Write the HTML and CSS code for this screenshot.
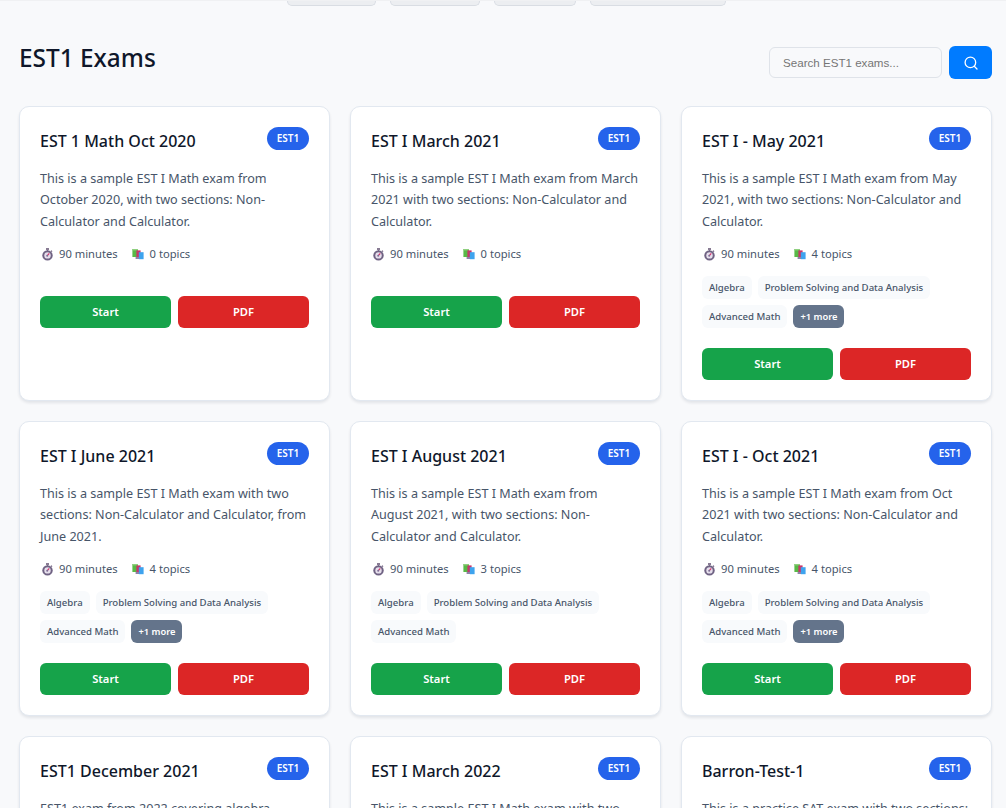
FILE: index.html
```html
<!DOCTYPE html>
<html lang="en">
  <head>
    <meta charset="UTF-8" />
    <title>EST1 Exams</title>
    <link rel="stylesheet" href="styles.css">
  </head>
  <body>
    <svg class="icon-defs" width="0" height="0" aria-hidden="true">
      <symbol id="watch" viewBox="0 0 15 15">
        <rect x="6" y="1.2" width="3" height="1.6" fill="#6b5b7b"/>
        <rect x="6.9" y="2" width="1.2" height="2" fill="#8a7f95"/>
        <path d="M11 3.6 12 4.6" stroke="#6b5b7b" stroke-width="1.2"/>
        <circle cx="7.5" cy="8.4" r="5.2" fill="#6f6283"/>
        <circle cx="7.5" cy="8.4" r="3.2" fill="#e6dfec"/>
        <path d="M7.5 8.4 9.3 6.4" stroke="#d8326b" stroke-width="1.2"/>
        <circle cx="7.2" cy="8.8" r="1" fill="#7b6b93"/>
      </symbol>
      <symbol id="books" viewBox="0 0 15 15">
        <rect x="1.4" y="2" width="5.6" height="8" fill="#58b947"/>
        <rect x="1.4" y="2" width="5.6" height="1.4" fill="#8fd07f"/>
        <rect x="5.4" y="3.4" width="4.2" height="8.2" fill="#c8366a"/>
        <rect x="7.8" y="5.2" width="4.8" height="7" fill="#3ea3ee"/>
        <rect x="4.6" y="10" width="3.4" height="2" fill="#8d83a8"/>
      </symbol>
    </svg>
    <div class="top-tabs">
      <span class="top-tab tab-a"></span>
      <span class="top-tab tab-b"></span>
      <span class="top-tab tab-c"></span>
      <span class="top-tab tab-d"></span>
    </div>
    <main class="page">
      <div class="page-head">
        <h1>EST1 Exams</h1>
        <form class="search">
          <input type="text" placeholder="Search EST1 exams..." />
          <button type="button" class="search-btn" aria-label="Search">
            <svg width="14" height="14" viewBox="0 0 14 14" fill="none" stroke="#fff" stroke-width="1.3"><circle cx="6.4" cy="6.4" r="5.3"/><path d="M10.3 10.3 13 13" stroke-linecap="round"/></svg>
          </button>
        </form>
      </div>
      <div class="grid">
        <div class="card">
          <div class="card-head"><h3>EST 1 Math Oct 2020</h3><span class="badge">EST1</span></div>
          <p>This is a sample EST I Math exam from October 2020, with two sections: Non-Calculator and Calculator.</p>
          <div class="meta"><span class="meta-item"><svg class="icon"><use href="#watch"/></svg>90 minutes</span><span class="meta-item"><svg class="icon"><use href="#books"/></svg>0 topics</span></div>
          <div class="actions"><a class="btn start">Start</a><a class="btn pdf">PDF</a></div>
        </div>
        <div class="card">
          <div class="card-head"><h3>EST I March 2021</h3><span class="badge">EST1</span></div>
          <p>This is a sample EST I Math exam from March 2021 with two sections: Non-Calculator and Calculator.</p>
          <div class="meta"><span class="meta-item"><svg class="icon"><use href="#watch"/></svg>90 minutes</span><span class="meta-item"><svg class="icon"><use href="#books"/></svg>0 topics</span></div>
          <div class="actions"><a class="btn start">Start</a><a class="btn pdf">PDF</a></div>
        </div>
        <div class="card">
          <div class="card-head"><h3>EST I - May 2021</h3><span class="badge">EST1</span></div>
          <p>This is a sample EST I Math exam from May 2021, with two sections: Non-Calculator and Calculator.</p>
          <div class="meta"><span class="meta-item"><svg class="icon"><use href="#watch"/></svg>90 minutes</span><span class="meta-item"><svg class="icon"><use href="#books"/></svg>4 topics</span></div>
          <div class="tags"><span class="tag">Algebra</span><span class="tag">Problem Solving and Data Analysis</span><span class="tag">Advanced Math</span><span class="tag more">+1 more</span></div>
          <div class="actions"><a class="btn start">Start</a><a class="btn pdf">PDF</a></div>
        </div>
        <div class="card">
          <div class="card-head"><h3>EST I June 2021</h3><span class="badge">EST1</span></div>
          <p>This is a sample EST I Math exam with two sections: Non-Calculator and Calculator, from June 2021.</p>
          <div class="meta"><span class="meta-item"><svg class="icon"><use href="#watch"/></svg>90 minutes</span><span class="meta-item"><svg class="icon"><use href="#books"/></svg>4 topics</span></div>
          <div class="tags"><span class="tag">Algebra</span><span class="tag">Problem Solving and Data Analysis</span><span class="tag">Advanced Math</span><span class="tag more">+1 more</span></div>
          <div class="actions"><a class="btn start">Start</a><a class="btn pdf">PDF</a></div>
        </div>
        <div class="card">
          <div class="card-head"><h3>EST I August 2021</h3><span class="badge">EST1</span></div>
          <p>This is a sample EST I Math exam from August 2021, with two sections: Non-Calculator and Calculator.</p>
          <div class="meta"><span class="meta-item"><svg class="icon"><use href="#watch"/></svg>90 minutes</span><span class="meta-item"><svg class="icon"><use href="#books"/></svg>3 topics</span></div>
          <div class="tags"><span class="tag">Algebra</span><span class="tag">Problem Solving and Data Analysis</span><span class="tag">Advanced Math</span></div>
          <div class="actions"><a class="btn start">Start</a><a class="btn pdf">PDF</a></div>
        </div>
        <div class="card">
          <div class="card-head"><h3>EST I - Oct 2021</h3><span class="badge">EST1</span></div>
          <p>This is a sample EST I Math exam from Oct 2021 with two sections: Non-Calculator and Calculator.</p>
          <div class="meta"><span class="meta-item"><svg class="icon"><use href="#watch"/></svg>90 minutes</span><span class="meta-item"><svg class="icon"><use href="#books"/></svg>4 topics</span></div>
          <div class="tags"><span class="tag">Algebra</span><span class="tag">Problem Solving and Data Analysis</span><span class="tag">Advanced Math</span><span class="tag more">+1 more</span></div>
          <div class="actions"><a class="btn start">Start</a><a class="btn pdf">PDF</a></div>
        </div>
        <div class="card">
          <div class="card-head"><h3>EST1 December 2021</h3><span class="badge">EST1</span></div>
          <p>EST1 exam from 2022 covering algebra, geometry and data analysis.</p>
        </div>
        <div class="card">
          <div class="card-head"><h3>EST I March 2022</h3><span class="badge">EST1</span></div>
          <p>This is a sample EST I Math exam with two sections: Non-Calculator and Calculator.</p>
        </div>
        <div class="card">
          <div class="card-head"><h3>Barron-Test-1</h3><span class="badge">EST1</span></div>
          <p>This is a practice SAT exam with two sections: Non-Calculator and Calculator.</p>
        </div>
      </div>
    </main>
  </body>
</html>
```

FILE: styles.css
```css
* {
  box-sizing: border-box;
}
html,
body {
  height: 100%;
  overflow: hidden;
}
body {
  margin: 0;
  background-color: #f8f9fb;
  font-family: "Noto Sans", sans-serif;
  color: #0f172a;
}
.icon-defs {
  display: block;
}
.top-tabs {
  display: flex;
  justify-content: center;
  gap: 14px;
  height: 6px;
  padding-left: 6px;
  border-top: 1px solid #f0f1f3;
}
.top-tab {
  display: block;
  height: 5px;
  background-color: #eceef1;
  border: 1px solid #d9dde3;
  border-top: 0;
  border-radius: 0 0 10px 10px;
}
.tab-a { width: 89px; }
.tab-b { width: 90px; }
.tab-c { width: 82px; }
.tab-d { width: 136px; }
.page {
  padding: 40px 14px 0 19px;
}
.page-head {
  display: flex;
  justify-content: space-between;
  align-items: flex-start;
  height: 33px;
  margin-bottom: 27px;
}
h1 {
  margin: 0;
  font-size: 24.4px;
  font-weight: 500;
  line-height: 24px;
}
.search {
  display: flex;
  gap: 7px;
}
.search input {
  width: 173px;
  height: 31px;
  margin-top: 1px;
  padding: 0 13px;
  background-color: #f8f9fb;
  border: 1px solid #dfe3e9;
  border-radius: 6px;
  font-family: "Liberation Sans", sans-serif;
  font-size: 11.6px;
}
.search input::placeholder {
  color: #757575;
}
.search-btn {
  display: flex;
  align-items: center;
  justify-content: center;
  width: 43px;
  height: 33px;
  padding: 0;
  background-color: #007bff;
  border: 0;
  border-radius: 6px;
}
.grid {
  display: grid;
  grid-template-columns: repeat(3, 311px);
  grid-auto-rows: 295px;
  column-gap: 20px;
  row-gap: 20px;
}
.card {
  display: flex;
  flex-direction: column;
  padding: 20px;
  background-color: #fff;
  border: 1px solid #e2e8f0;
  border-radius: 10px;
  box-shadow: 0 2px 3px rgba(15, 23, 42, 0.09);
}
.card-head {
  display: flex;
  flex-shrink: 0;
  justify-content: space-between;
  align-items: flex-start;
  height: 30px;
  margin-bottom: 11px;
}
h3 {
  margin: 3px 0 0;
  font-size: 16px;
  font-weight: 500;
  line-height: 23px;
}
.badge {
  width: 42px;
  height: 23px;
  background-color: #2563eb;
  border-radius: 12px;
  color: #fff;
  font-size: 10px;
  font-weight: 600;
  line-height: 23px;
  text-align: center;
}
p {
  flex-shrink: 0;
  margin: 0 0 12px;
  font-size: 12.6px;
  line-height: 21.4px;
  color: #475569;
}
.meta {
  display: flex;
  flex-shrink: 0;
  gap: 13px;
  height: 20px;
  margin-bottom: 12px;
  font-size: 11.2px;
  line-height: 20px;
  color: #475569;
}
.meta-item {
  display: flex;
  align-items: center;
  gap: 4px;
}
.icon {
  width: 15px;
  height: 15px;
}
.tags {
  display: flex;
  flex-wrap: wrap;
  gap: 6px;
}
.tag {
  height: 23px;
  padding: 0 7px;
  background-color: #f8fafc;
  border-radius: 6px;
  font-size: 9.6px;
  font-weight: 500;
  line-height: 23px;
  color: #475569;
}
.tag.more {
  background-color: #64748b;
  color: #fff;
  font-size: 9.3px;
  font-weight: 600;
}
.actions {
  display: flex;
  gap: 7px;
  margin-top: 20px;
}
.btn {
  flex: 1;
  height: 32px;
  border-radius: 6px;
  color: #fff;
  font-size: 11.2px;
  font-weight: 600;
  line-height: 32px;
  text-align: center;
}
.start {
  background-color: #16a34a;
}
.pdf {
  background-color: #dc2626;
}
```
